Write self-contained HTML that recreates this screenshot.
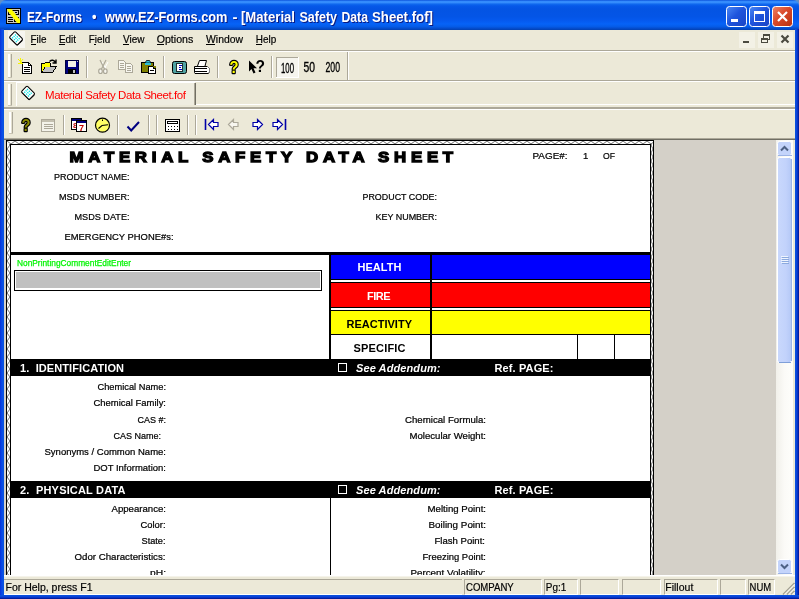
<!DOCTYPE html>
<html><head><meta charset="utf-8">
<style>
*{box-sizing:border-box;margin:0;padding:0}
html,body{width:799px;height:599px;overflow:hidden;background:#ece9d8;font-family:"Liberation Sans",sans-serif}
.a{position:absolute}
svg{will-change:transform}
.t{position:absolute;white-space:nowrap;line-height:1}
#title{left:0;top:0;width:799px;height:30px;background:linear-gradient(to bottom,#0b50d8 0%,#2f86fb 4%,#3d95ff 7%,#2a82f8 10%,#0f68ee 14%,#0658e8 20%,#0454e3 30%,#0455e6 55%,#0559ee 68%,#0663f7 80%,#055ce9 88%,#044ed0 94%,#0340b0 100%);border-radius:6px 6px 0 0}
#lb{left:0;top:29px;width:4px;height:570px;background:linear-gradient(to right,#0831d9,#0a4de8 50%,#0855dd)}
#rb{left:795px;top:29px;width:4px;height:570px;background:linear-gradient(to right,#0855dd,#0a3fd8 50%,#00138c)}
#bb{left:0;top:595px;width:799px;height:4px;background:linear-gradient(to bottom,#0855dd,#0a3fd8 50%,#00138c)}
.ttxt{color:#fff;font-weight:bold;font-size:14px;left:27px;top:10px;text-shadow:1px 1px 0 #0a1883}
.m{font-size:11.5px;top:33px;color:#000}
.m u{text-decoration:underline}
.hl{height:1px;left:4px;width:791px}
.grip{width:3px;border-left:1px solid #fff;border-right:1px solid #aca899;background:#ece9d8;box-shadow:1px 0 0 #ece9d8}
.vsep{width:2px;border-left:1px solid #aca899;border-right:1px solid #fff}
.lbl{font-size:9px;color:#000;text-align:right}
.sec{font-size:11px;font-weight:bold;color:#fff}
.sp{top:579px;height:16px;border:1px solid;border-color:#aca899 #fff #fff #aca899;font-size:11px;line-height:14px;padding-left:1px;white-space:nowrap;overflow:hidden}
</style></head><body>
<!-- frame -->
<div class="a" style="left:0;top:0;width:799px;height:8px;background:#5f8fc8"></div>
<div class="a" id="title"></div>
<div class="a" id="lb"></div><div class="a" id="rb"></div><div class="a" id="bb"></div>


<!-- chrome overlay -->
<svg class="a" style="left:0;top:0" width="799" height="599" viewBox="0 0 799 599" font-family="Liberation Sans, sans-serif">
<defs>
<linearGradient id="gb" x1="0" y1="0" x2="1" y2="1"><stop offset="0" stop-color="#4d8af5"/><stop offset="0.45" stop-color="#1f55dd"/><stop offset="1" stop-color="#1a44c4"/></linearGradient>
<linearGradient id="gr" x1="0" y1="0" x2="1" y2="1"><stop offset="0" stop-color="#ee8468"/><stop offset="0.45" stop-color="#d9492a"/><stop offset="1" stop-color="#b7300f"/></linearGradient>
<linearGradient id="gs" x1="0" y1="0" x2="1" y2="0"><stop offset="0" stop-color="#c9d8fc"/><stop offset="0.6" stop-color="#c2d2fb"/><stop offset="1" stop-color="#b4c8f6"/></linearGradient>
<linearGradient id="gt" x1="0" y1="0" x2="1" y2="0"><stop offset="0" stop-color="#f1f0ea"/><stop offset="0.5" stop-color="#fbfaf7"/><stop offset="1" stop-color="#fefefb"/></linearGradient>

</defs>
<!-- title icon -->
<g shape-rendering="crispEdges">
<rect x="6" y="8" width="15" height="16" fill="#000"/><rect x="7" y="9" width="13" height="14" fill="#c8c8c4"/>
<rect x="8.500" y="10.500" width="10" height="4" fill="none" stroke="#000"/>
<path d="M10,12.500 h2 M15,12.500 h2 M8,17.500 h5 M8,19.500 h5 M8,21.500 h5 M14.500,17 v4.500 h4 M15,17.500 h3.500 v3" stroke="#000" stroke-width="1" fill="none"/>
</g>
<path d="M7.600,9 L11.300,9 L20,19.800 L20,23 L17.200,23 L7.600,11 Z" fill="#ffff00"/>
<!-- title buttons -->
<rect x="726.5" y="6.5" width="20" height="20" rx="3" fill="url(#gb)" stroke="#fff" stroke-width="1"/>
<rect x="731" y="19" width="7" height="3" fill="#fff"/>
<rect x="749.5" y="6.5" width="20" height="20" rx="3" fill="url(#gb)" stroke="#fff" stroke-width="1"/>
<rect x="754.5" y="11.5" width="10" height="10" fill="none" stroke="#fff" stroke-width="1"/><rect x="754" y="11" width="11" height="3" fill="#fff"/>
<rect x="772.5" y="6.5" width="20" height="20" rx="3" fill="url(#gr)" stroke="#fff" stroke-width="1"/>
<path d="M778,12 L787,21 M787,12 L778,21" stroke="#fff" stroke-width="2.2" stroke-linecap="butt"/>
<!-- menu icon -->
<rect x="8" y="31" width="17" height="17" fill="#f7f6f0"/>
<g transform="translate(16,38.3)"><g transform="rotate(45)"><rect x="-5.2" y="-3.6" width="11.6" height="8.4" rx="1.2" fill="#000"/><rect x="-5.6" y="-4.2" width="11.2" height="8.2" rx="1.2" fill="#fff" stroke="#000" stroke-width="1"/><path d="M-3.5,-2 h7 M-3.5,0 h7 M-3.5,2 h7" stroke="#00e0e0" stroke-width="1.1" stroke-dasharray="1.6 1"/></g></g>
<!-- MDI buttons -->
<g shape-rendering="crispEdges">
<rect x="739" y="32" width="16" height="16" fill="#f3f1e6"/><rect x="758" y="32" width="16" height="16" fill="#f3f1e6"/><rect x="777" y="32" width="16" height="16" fill="#f3f1e6"/>
<rect x="743" y="41" width="6" height="2" fill="#4b4a40"/>
<rect x="763.5" y="34.5" width="6" height="5" fill="none" stroke="#4b4a40"/><rect x="763" y="34" width="7" height="2" fill="#4b4a40"/>
<rect x="761.5" y="38.5" width="6" height="4" fill="#f3f1e6" stroke="#4b4a40"/><rect x="761" y="38" width="7" height="2" fill="#4b4a40"/>
</g>
<path d="M781.5,35.5 L788.5,42.5 M788.5,35.5 L781.5,42.5" stroke="#4b4a40" stroke-width="2.2"/>
</svg>

<!-- toolbars overlay -->
<svg class="a" style="left:0;top:0" width="799" height="599" viewBox="0 0 799 599" font-family="Liberation Sans, sans-serif">
<g shape-rendering="crispEdges">
<!-- grippers -->
<g id="grips"><rect x="8" y="54" width="2" height="24" fill="#fff"/><rect x="10" y="54" width="1" height="24" fill="#e4e1d0"/><rect x="11" y="54" width="1" height="24" fill="#aca899"/><rect x="8" y="77" width="4" height="1" fill="#c8c4b4"/><rect x="8" y="84" width="2" height="22" fill="#fff"/><rect x="10" y="84" width="1" height="22" fill="#e4e1d0"/><rect x="11" y="84" width="1" height="22" fill="#aca899"/><rect x="8" y="105" width="4" height="1" fill="#c8c4b4"/><rect x="9" y="112" width="2" height="22" fill="#fff"/><rect x="11" y="112" width="1" height="22" fill="#e4e1d0"/><rect x="12" y="112" width="1" height="22" fill="#aca899"/><rect x="9" y="133" width="4" height="1" fill="#c8c4b4"/></g>
<!-- separators toolbar1 -->
<g fill="#aca899"><rect x="86" y="56" width="1" height="22"/><rect x="163" y="56" width="1" height="22"/><rect x="217" y="56" width="1" height="22"/><rect x="271" y="56" width="1" height="22"/><rect x="347" y="52" width="1" height="28"/></g>
<g fill="#fff"><rect x="87" y="56" width="1" height="22"/><rect x="164" y="56" width="1" height="22"/><rect x="218" y="56" width="1" height="22"/><rect x="272" y="56" width="1" height="22"/><rect x="348" y="52" width="1" height="28"/></g>
<!-- separators toolbar2 -->
<g fill="#aca899"><rect x="63" y="115" width="1" height="20"/><rect x="117" y="115" width="1" height="20"/><rect x="148" y="115" width="1" height="20"/><rect x="156" y="115" width="1" height="20"/><rect x="187" y="115" width="1" height="20"/><rect x="195" y="115" width="1" height="20"/></g>
<g fill="#fff"><rect x="64" y="115" width="1" height="20"/><rect x="118" y="115" width="1" height="20"/><rect x="149" y="115" width="1" height="20"/><rect x="157" y="115" width="1" height="20"/><rect x="188" y="115" width="1" height="20"/><rect x="196" y="115" width="1" height="20"/></g>

<!-- NEW -->
<path d="M22.5,62.5 h6 l3,3 v8 h-9 z" fill="#fff" stroke="#000"/><path d="M28.5,62.5 v3 h3" fill="none" stroke="#000"/>
<path d="M24,67.5 h6 M24,69.5 h6 M24,71.5 h6" stroke="#000"/>
<path d="M18,59 l5,5 M23,59 l-3,4 M18,63.500 h5 M20.500,58 v5" stroke="#f4f400" fill="none" shape-rendering="auto"/>
<!-- OPEN -->
<path d="M41.500,72.500 v-9 h3 l1,-1 h4 l1,1 v3" fill="#ffff00" stroke="#000"/>
<path d="M41.500,72.500 l4,-6 h11 l-4,6 z" fill="#c0c0c0" stroke="#000"/>
<path d="M42,64 h8 v2.500 h-5 l-3,5 z" fill="#ffff00"/>
<path d="M49.500,61.500 q3.500,-3 6,1 M56,59.500 v3.500 h-3.500" fill="none" stroke="#000" stroke-width="1.400" shape-rendering="auto"/>
<!-- SAVE -->
<rect x="65" y="60" width="14" height="14" fill="#000080"/><rect x="65.500" y="60.500" width="13" height="13" fill="none" stroke="#000040"/>
<rect x="68" y="61" width="8" height="6" fill="#f4f2e6"/><rect x="68" y="69" width="8" height="5" fill="#000"/><rect x="73" y="70" width="2" height="3" fill="#c0c0c0"/><rect x="77" y="61" width="1" height="1" fill="#c0c0c0"/>
<!-- CUT (disabled) -->
<g shape-rendering="auto" fill="none"><path d="M101,61 L105.500,69.500 M107,61 L102.500,69.500" stroke="#fff" transform="translate(1,1)"/><path d="M100,60 L104.500,69 M106,60 L101.500,69" stroke="#aca899" stroke-width="1.2"/><ellipse cx="100.500" cy="71.200" rx="1.800" ry="2.300" stroke="#aca899" stroke-width="1.200" fill="#f8f7f0"/><ellipse cx="105.300" cy="71.200" rx="1.800" ry="2.300" stroke="#aca899" stroke-width="1.200" fill="#f8f7f0"/></g>
<!-- COPY (disabled) -->
<path d="M118.500,60.500 h5 l2,2 v7 h-7 z" fill="#f8f7f0" stroke="#aca899"/><path d="M120,63.500 h4 M120,65.500 h4 M120,67.500 h4" stroke="#aca899"/>
<path d="M125.500,63.500 h5 l2,2 v7 h-7 z" fill="#f8f7f0" stroke="#aca899"/><path d="M127,66.500 h4 M127,68.500 h4 M127,70.500 h4" stroke="#aca899"/>
<!-- PASTE -->
<rect x="141.500" y="62.500" width="12" height="10" rx="1" fill="#808000" stroke="#000"/>
<path d="M145,63 l1.500,-2.500 h3 l1.500,2.500 z" fill="#30c0d8" stroke="#000" stroke-width="0.8" shape-rendering="auto"/><rect x="145" y="63" width="6" height="1.500" fill="#30c0d8"/>
<rect x="148.500" y="66.500" width="7" height="7" fill="#fff" stroke="#000"/><rect x="153" y="66" width="3" height="2" fill="#808000"/><path d="M153.500,66.500 v2 h2" fill="none" stroke="#000"/><path d="M150,70.500 h4" stroke="#000"/>
<!-- PREVIEW -->
<rect x="172.500" y="61.500" width="14" height="12" rx="2" fill="#4fa3a3" stroke="#000" shape-rendering="auto"/><rect x="176.500" y="63.500" width="6" height="8" fill="#fff" stroke="#203030"/><path d="M178.500,65.500 h3 M178.500,67.500 h2 M178.500,69.500 h3" stroke="#0000c0"/>
<!-- PRINT -->
<path d="M197.500,66 l2,-5.500 h7 l-1.500,5.500" fill="#fff" stroke="#000" shape-rendering="auto"/>
<path d="M194.500,66.500 h13 l2,2 v4 l-1.500,1 h-13 l-0.500,-1 z" fill="#fff" stroke="#000" shape-rendering="auto"/>
<path d="M195,68.500 h12 M195,71.500 h12" stroke="#000" stroke-width="1.500"/><path d="M207.500,66.500 l2,2 v4" stroke="#808080" fill="none"/>
<!-- CALENDAR icon (toolbar2) -->
<rect x="71.500" y="118.500" width="10" height="11" fill="#fff" stroke="#000"/><rect x="72" y="119" width="9" height="2" fill="#000080"/><text x="73" y="128" font-size="8" font-weight="bold" fill="#c00000" shape-rendering="auto">8</text>
<rect x="76.500" y="120.500" width="10" height="11" fill="#fff" stroke="#000"/><rect x="77" y="121" width="9" height="2" fill="#000080"/>
<!-- FORM (disabled) -->
<rect x="41.500" y="119.500" width="13" height="12" fill="#f4f3ea" stroke="#aca899"/><rect x="42" y="120" width="12" height="2" fill="#c4c0b0"/><path d="M43.500,124.500 h9 M43.500,126.500 h9 M43.500,128.500 h9" stroke="#aca899"/>
<!-- CALCULATOR -->
<rect x="165.500" y="119.500" width="14" height="12" rx="1" fill="#fff" stroke="#000" stroke-width="1.300"/><rect x="167.500" y="121.500" width="10" height="2" fill="#fff" stroke="#000"/>
<path d="M168,126.500 h1 M171,126.500 h1 M174,126.500 h1 M177,126.500 h1 M168,129.500 h1 M171,129.500 h1 M174,129.500 h1 M177,129.500 h1" stroke="#000" stroke-width="1.600"/>
<!-- zoom pressed button -->
<rect x="276" y="57" width="23" height="21" fill="#f6f5ee"/><rect x="276" y="57" width="23" height="1" fill="#aca899"/><rect x="276" y="57" width="1" height="21" fill="#aca899"/><rect x="276" y="77" width="23" height="1" fill="#fff"/><rect x="298" y="57" width="1" height="21" fill="#fff"/>
</g>
<!-- anti-aliased icon parts -->
<text x="76.500" y="130.500" font-size="9" font-weight="bold" fill="#c00000" transform="translate(2.500,0)">7</text>
<!-- help ? yellow -->
<text x="229.500" y="72.800" font-size="17" font-weight="bold" fill="#ffff00" stroke="#000" stroke-width="2.600" stroke-linejoin="round" paint-order="stroke" textLength="9" lengthAdjust="spacingAndGlyphs">?</text>
<!-- context help -->
<path d="M249,60.500 v11 l2.500,-2.500 l2,4.500 l2,-1 l-2,-4.300 h3.500 z" fill="#000"/>
<text x="255.500" y="72.300" font-size="17" font-weight="bold" fill="#000" textLength="9.500" lengthAdjust="spacingAndGlyphs">?</text>
<!-- ? olive -->
<text x="21.500" y="131.300" font-size="17" font-weight="bold" fill="#8c8c00" stroke="#000" stroke-width="2.600" stroke-linejoin="round" paint-order="stroke" textLength="9" lengthAdjust="spacingAndGlyphs">?</text>
<!-- clock -->
<circle cx="102.500" cy="125.200" r="7" fill="#ffff66" stroke="#000" stroke-width="1.200"/><path d="M98.500,128.500 L102,125.500 L108,124.800" stroke="#000" stroke-width="1.100" fill="none"/><path d="M102.500,119.500 v1.500" stroke="#000"/>
<!-- check -->
<path d="M127.500,126.500 L131.200,130.500 L139,122" stroke="#000080" stroke-width="2" fill="none"/>
<!-- zoom digits -->
<g font-size="14" fill="#000" stroke="#000" stroke-width="0.350"><text x="281" y="72.500" textLength="13" lengthAdjust="spacingAndGlyphs">100</text><text x="303.500" y="72" textLength="11.500" lengthAdjust="spacingAndGlyphs">50</text><text x="325.500" y="72" textLength="14.500" lengthAdjust="spacingAndGlyphs">200</text></g>
<!-- nav arrows -->
<g fill="#fff" stroke="#0000a8" stroke-width="1.200" stroke-linejoin="miter">
<path d="M205.500,119 v11" stroke-width="1.600"/><path d="M208.500,124.500 l5,-5 v3 h4.500 v4 h-4.500 v3 z"/>
<path d="M262.500,124.500 l-5,-5 v3 h-4.500 v4 h4.500 v3 z"/>
<path d="M285.500,119 v11" stroke-width="1.600"/><path d="M282.500,124.500 l-5,-5 v3 h-4.500 v4 h4.500 v3 z"/>
</g>
<path d="M228.500,124.500 l5,-5 v3 h4.500 v4 h-4.500 v3 z" fill="#f8f7f0" stroke="#aca899" stroke-width="1.200"/>
<!-- tab -->
<g shape-rendering="crispEdges"><rect x="16" y="82" width="179" height="1" fill="#fff"/><rect x="16" y="82" width="1" height="24" fill="#fff"/><rect x="194" y="83" width="1" height="22" fill="#aca899"/><rect x="195" y="83" width="1" height="22" fill="#716f64"/><rect x="196" y="104" width="599" height="1" fill="#fff"/><rect x="17" y="83" width="177" height="22" fill="#efede0"/></g>
<g transform="translate(28,92.800)"><g transform="rotate(45)"><rect x="-5.2" y="-3.6" width="11.6" height="8.4" rx="1.2" fill="#000"/><rect x="-5.6" y="-4.2" width="11.2" height="8.2" rx="1.2" fill="#fff" stroke="#000" stroke-width="1"/><path d="M-3.5,-2 h7 M-3.5,0 h7 M-3.5,2 h7" stroke="#00e0e0" stroke-width="1.1" stroke-dasharray="1.6 1"/></g></g>
<text x="45" y="98.500" font-size="11.500" fill="#ff0000" textLength="141" lengthAdjust="spacing">Material Safety Data Sheet.fof</text>
</svg>
<!-- title + menu text -->
<svg class="a" style="left:0;top:0" width="799" height="599" viewBox="0 0 799 599" font-family="Liberation Sans, sans-serif">
<g font-size="14" font-weight="bold"><text x="28" y="23" fill="#0a1a80" textLength="55" lengthAdjust="spacingAndGlyphs">EZ-Forms</text><text x="93" y="23" fill="#0a1a80" textLength="4.5" lengthAdjust="spacingAndGlyphs">•</text><text x="106" y="23" fill="#0a1a80" textLength="122.5" lengthAdjust="spacingAndGlyphs">www.EZ-Forms.com</text><text x="233.5" y="23" fill="#0a1a80" textLength="5.0" lengthAdjust="spacingAndGlyphs">-</text><text x="242" y="23" fill="#0a1a80" textLength="54" lengthAdjust="spacingAndGlyphs">[Material</text><text x="300.5" y="23" fill="#0a1a80" textLength="37.5" lengthAdjust="spacingAndGlyphs">Safety</text><text x="342.5" y="23" fill="#0a1a80" textLength="26.5" lengthAdjust="spacingAndGlyphs">Data</text><text x="373" y="23" fill="#0a1a80" textLength="61" lengthAdjust="spacingAndGlyphs">Sheet.fof]</text>
<text x="27" y="22" fill="#fff" textLength="55" lengthAdjust="spacingAndGlyphs">EZ-Forms</text><text x="92" y="22" fill="#fff" textLength="4.5" lengthAdjust="spacingAndGlyphs">•</text><text x="105" y="22" fill="#fff" textLength="122.5" lengthAdjust="spacingAndGlyphs">www.EZ-Forms.com</text><text x="232.5" y="22" fill="#fff" textLength="5.0" lengthAdjust="spacingAndGlyphs">-</text><text x="241" y="22" fill="#fff" textLength="54" lengthAdjust="spacingAndGlyphs">[Material</text><text x="299.5" y="22" fill="#fff" textLength="37.5" lengthAdjust="spacingAndGlyphs">Safety</text><text x="341.5" y="22" fill="#fff" textLength="26.5" lengthAdjust="spacingAndGlyphs">Data</text><text x="372" y="22" fill="#fff" textLength="61" lengthAdjust="spacingAndGlyphs">Sheet.fof]</text></g>
<g font-size="11" fill="#000" stroke="#000" stroke-width="0.2">
<text x="30.5" y="42.500" textLength="16" lengthAdjust="spacingAndGlyphs">File</text>
<text x="59" y="42.500" textLength="17" lengthAdjust="spacingAndGlyphs">Edit</text>
<text x="88.700" y="42.500" textLength="21.500" lengthAdjust="spacingAndGlyphs">Field</text>
<text x="123" y="42.500" textLength="21.500" lengthAdjust="spacingAndGlyphs">View</text>
<text x="156.700" y="42.500" textLength="36.600" lengthAdjust="spacingAndGlyphs">Options</text>
<text x="206" y="42.500" textLength="37" lengthAdjust="spacingAndGlyphs">Window</text>
<text x="255.800" y="42.500" textLength="20.500" lengthAdjust="spacingAndGlyphs">Help</text>
</g>
<g shape-rendering="crispEdges" fill="#000"><rect x="31" y="44" width="5" height="1"/><rect x="59" y="44" width="6" height="1"/><rect x="94" y="44" width="2" height="1"/><rect x="123" y="44" width="6" height="1"/><rect x="157" y="44" width="7" height="1"/><rect x="206" y="44" width="9" height="1"/><rect x="256" y="44" width="6" height="1"/></g>
</svg>
<!-- menu -->
<div class="a hl" style="top:50px;background:#aca899"></div>
<div class="a hl" style="top:51px;background:#fff"></div>
<div class="a hl" style="top:80px;background:#aca899"></div>
<div class="a hl" style="top:81px;background:#fff"></div>
<div class="a hl" style="top:107px;background:#aca899;height:2px"></div>
<div class="a hl" style="top:109px;background:#fff"></div>

<!-- doc area -->
<div class="a" style="left:4px;top:138px;width:791px;height:1px;background:#aca899"></div><div class="a" style="left:4px;top:139px;width:791px;height:1px;background:#716f64"></div><div class="a" style="left:5px;top:139px;width:1px;height:436px;background:#716f64"></div>
<div class="a" style="left:4px;top:140px;width:772px;height:435px;background:#d4d0c8"></div>
<div class="a" id="page" style="left:6px;top:140px;width:648px;height:435px;overflow:hidden">
<svg class="a" style="left:0;top:0" width="648" height="435" viewBox="6 140 648 435" shape-rendering="crispEdges">
<defs><pattern id="hatch" x="7" y="141" width="8" height="3" patternUnits="userSpaceOnUse"><rect width="8" height="3" fill="#fff"/><path d="M0,0 L4,3 L8,0" stroke="#444" stroke-width="0.75" fill="none" shape-rendering="auto"/></pattern>
<pattern id="hatchv" x="7" y="141" width="3" height="8" patternUnits="userSpaceOnUse"><rect width="3" height="8" fill="#fff"/><path d="M0,0 L3,4 L0,8" stroke="#444" stroke-width="0.75" fill="none" shape-rendering="auto"/></pattern>
<pattern id="hatchr" x="651" y="141" width="2" height="8" patternUnits="userSpaceOnUse"><rect width="2" height="8" fill="#fff"/><path d="M2,0 L0,4 L2,8" stroke="#444" stroke-width="0.75" fill="none" shape-rendering="auto"/></pattern></defs>
<rect x="6" y="140" width="648" height="440" fill="#fff"/>
<rect x="7" y="141" width="646" height="3" fill="url(#hatch)"/>
<rect x="7" y="144" width="3" height="440" fill="url(#hatchv)"/>
<rect x="651" y="144" width="2" height="440" fill="url(#hatchr)"/>
<rect x="6" y="140" width="648" height="1" fill="#000"/>
<rect x="6" y="140" width="1" height="440" fill="#000"/>
<rect x="653" y="140" width="1" height="440" fill="#000"/>
<rect x="10" y="144" width="641" height="1" fill="#000"/>
<rect x="10" y="144" width="1" height="440" fill="#000"/>
<rect x="650" y="144" width="1" height="440" fill="#000"/>
<!-- header divider -->
<rect x="11" y="252" width="639" height="3" fill="#000"/>
<rect x="329" y="255" width="2" height="104" fill="#000"/>
<!-- comment box -->
<rect x="14.5" y="270.5" width="307" height="20" fill="#fff" stroke="#000" stroke-width="1"/>
<rect x="16" y="272" width="304" height="16" fill="#c0c0c0"/>
<!-- color rows -->
<rect x="331" y="255" width="319" height="24" fill="#0000ff"/>
<rect x="331" y="279" width="319" height="1" fill="#000"/>
<rect x="331" y="282" width="319" height="1" fill="#000"/>
<rect x="331" y="283" width="319" height="24" fill="#ff0000"/>
<rect x="331" y="307" width="319" height="1" fill="#000"/>
<rect x="331" y="310" width="319" height="1" fill="#000"/>
<rect x="331" y="311" width="319" height="23" fill="#ffff00"/>
<rect x="331" y="334" width="319" height="1" fill="#000"/>
<rect x="430" y="255" width="2" height="104" fill="#000"/>
<rect x="577" y="335" width="1" height="24" fill="#000"/>
<rect x="614" y="335" width="1" height="24" fill="#000"/>
<!-- section bars -->
<rect x="11" y="359" width="640" height="17" fill="#000"/>
<rect x="11" y="481" width="640" height="17" fill="#000"/>
<rect x="330" y="498" width="1" height="90" fill="#000"/>
<rect x="338.5" y="363.5" width="8" height="8" fill="none" stroke="#fff"/>
<rect x="338.5" y="485.5" width="8" height="8" fill="none" stroke="#fff"/>
</svg>
<svg class="a" style="left:0;top:0" width="648" height="435" viewBox="6 140 648 435" font-family="Liberation Sans, sans-serif">
<g font-size="15" font-weight="bold" fill="#000" stroke="#000" stroke-width="1.3" stroke-linejoin="miter" transform="translate(69.5,0) scale(1.12,1)">
<text x="0" y="162.5" textLength="342.5" lengthAdjust="spacing">MATERIAL  SAFETY  DATA  SHEET</text>
</g>
<g font-size="9.5" fill="#000" stroke="#000" stroke-width="0.22" class="lb">
<text x="54" y="180" textLength="75.5" lengthAdjust="spacingAndGlyphs">PRODUCT NAME:</text>
<text x="59" y="200" textLength="70.5" lengthAdjust="spacingAndGlyphs">MSDS NUMBER:</text>
<text x="74.5" y="220" textLength="55" lengthAdjust="spacingAndGlyphs">MSDS DATE:</text>
<text x="64.5" y="240" textLength="109" lengthAdjust="spacingAndGlyphs">EMERGENCY PHONE#s:</text>
<text x="362.5" y="200" textLength="74.5" lengthAdjust="spacingAndGlyphs">PRODUCT CODE:</text>
<text x="375.5" y="220" textLength="61.5" lengthAdjust="spacingAndGlyphs">KEY NUMBER:</text>
<text x="532.5" y="159" textLength="35" lengthAdjust="spacingAndGlyphs">PAGE#:</text>
<text x="583" y="159">1</text>
<text x="603" y="159" textLength="12" lengthAdjust="spacingAndGlyphs">OF</text>
</g>
<text x="17" y="266" font-size="9" fill="#00f400" stroke="#00f400" stroke-width="0.250" textLength="114" lengthAdjust="spacingAndGlyphs">NonPrintingCommentEditEnter</text>
<g font-size="11" font-weight="bold">
<text x="357.5" y="270.5" fill="#fff" textLength="44">HEALTH</text>
<text x="367" y="300" fill="#fff" textLength="23.5">FIRE</text>
<text x="346.5" y="328" fill="#000" textLength="65.5">REACTIVITY</text>
<text x="353.5" y="352" fill="#000" textLength="52">SPECIFIC</text>
<text x="20" y="372" fill="#fff" textLength="104" xml:space="preserve">1.  IDENTIFICATION</text>
<text x="20" y="494" fill="#fff" textLength="105.5" xml:space="preserve">2.  PHYSICAL DATA</text>
<text x="356" y="372" fill="#fff" font-style="italic" textLength="84.5">See Addendum:</text>
<text x="356" y="494" fill="#fff" font-style="italic" textLength="84.5">See Addendum:</text>
<text x="494.5" y="372" fill="#fff" textLength="59">Ref. PAGE:</text>
<text x="494.5" y="494" fill="#fff" textLength="59">Ref. PAGE:</text>
</g>
<g font-size="9.5" fill="#000" stroke="#000" stroke-width="0.22" class="lb">
<text x="97.5" y="390" textLength="68.5" lengthAdjust="spacingAndGlyphs">Chemical Name:</text>
<text x="93.5" y="406" textLength="72.5" lengthAdjust="spacingAndGlyphs">Chemical Family:</text>
<text x="137.5" y="422.5" textLength="28.5" lengthAdjust="spacingAndGlyphs">CAS #:</text>
<text x="113.5" y="438.5" textLength="47.5" lengthAdjust="spacingAndGlyphs">CAS Name:</text>
<text x="44.5" y="454.5" textLength="121.5" lengthAdjust="spacingAndGlyphs">Synonyms / Common Name:</text>
<text x="93.5" y="470.5" textLength="72.5" lengthAdjust="spacingAndGlyphs">DOT Information:</text>
<text x="405" y="422.5" textLength="81" lengthAdjust="spacingAndGlyphs">Chemical Formula:</text>
<text x="409.5" y="438.5" textLength="76.5" lengthAdjust="spacingAndGlyphs">Molecular Weight:</text>
<text x="111.5" y="512" textLength="54.5" lengthAdjust="spacingAndGlyphs">Appearance:</text>
<text x="140.5" y="528" textLength="25" lengthAdjust="spacingAndGlyphs">Color:</text>
<text x="141.5" y="544" textLength="24" lengthAdjust="spacingAndGlyphs">State:</text>
<text x="74.5" y="560" textLength="91" lengthAdjust="spacingAndGlyphs">Odor Characteristics:</text>
<text x="150" y="576" textLength="16" lengthAdjust="spacingAndGlyphs">pH:</text>
<text x="427.5" y="512" textLength="58.5" lengthAdjust="spacingAndGlyphs">Melting Point:</text>
<text x="428.5" y="528" textLength="57.5" lengthAdjust="spacingAndGlyphs">Boiling Point:</text>
<text x="434.5" y="544" textLength="50.5" lengthAdjust="spacingAndGlyphs">Flash Point:</text>
<text x="422.5" y="560" textLength="63.5" lengthAdjust="spacingAndGlyphs">Freezing Point:</text>
<text x="410.5" y="576" textLength="75" lengthAdjust="spacingAndGlyphs">Percent Volatility:</text>
</g>
</svg>
</div>

<!-- scrollbar -->
<svg class="a" style="left:776px;top:140px" width="19" height="435" viewBox="776 140 19 435">
<rect x="776" y="140" width="17" height="435" fill="url(#gt)"/>
<rect x="793" y="140" width="2" height="435" fill="#ece9d8"/>
<!-- up button -->
<rect x="777.500" y="141.500" width="14" height="14" rx="2" fill="#c4d4fb" stroke="#fff" stroke-width="1"/>
<rect x="778" y="155" width="14" height="1" fill="#9db4e6"/>
<path d="M781,150.500 L784.500,147 L788,150.500" fill="none" stroke="#4d6185" stroke-width="2"/>
<!-- thumb -->
<rect x="777.500" y="157.500" width="14" height="205" rx="2" fill="url(#gs)" stroke="#fff" stroke-width="1"/>
<rect x="791" y="159" width="1" height="202" fill="#9db4e6"/><rect x="779" y="362" width="12" height="1" fill="#7f9fd8"/>
<g shape-rendering="crispEdges"><path d="M781,256.500 h7 M781,258.500 h7 M781,260.500 h7 M781,262.500 h7" stroke="#eef4fe"/><path d="M782,257.500 h7 M782,259.500 h7 M782,261.500 h7 M782,263.500 h7" stroke="#8caade"/></g>
<!-- down button -->
<rect x="777.500" y="559.500" width="14" height="14" rx="2" fill="#c4d4fb" stroke="#fff" stroke-width="1"/>
<rect x="778" y="573" width="14" height="1" fill="#9db4e6"/>
<path d="M781,564.500 L784.500,568 L788,564.500" fill="none" stroke="#4d6185" stroke-width="2"/>
</svg>
<!-- status -->
<div class="a" style="left:4px;top:575px;width:791px;height:1px;background:#fff"></div><div class="a" style="left:4px;top:576px;width:791px;height:1px;background:#f5f3ea"></div>
<div class="a" style="left:4px;top:579px;width:458px;height:1px;background:#aca899"></div>
<div class="a" style="left:4px;top:594px;width:458px;height:1px;background:#fff"></div>
<div class="a sp" style="left:464px;width:78px"></div>
<div class="a sp" style="left:544px;width:34px"></div>
<div class="a sp" style="left:580px;width:39px"></div>
<div class="a sp" style="left:622px;width:39px"></div>
<div class="a sp" style="left:664px;width:54px"></div>
<div class="a sp" style="left:720px;width:26px"></div>
<div class="a sp" style="left:748px;width:27px"></div>
<svg class="a" style="left:0;top:576px" width="799" height="23" viewBox="0 576 799 23" font-family="Liberation Sans, sans-serif" font-size="11" fill="#000" stroke="#000" stroke-width="0.2">
<text x="5.500" y="590.500" textLength="87" lengthAdjust="spacingAndGlyphs">For Help, press F1</text>
<text x="466" y="590.500" textLength="47.700" lengthAdjust="spacingAndGlyphs">COMPANY</text>
<text x="545.800" y="590.500" textLength="20.500" lengthAdjust="spacingAndGlyphs">Pg:1</text>
<text x="665.300" y="590.500" textLength="28" lengthAdjust="spacingAndGlyphs">Fillout</text>
<text x="749.600" y="590.500" textLength="21.600" lengthAdjust="spacingAndGlyphs">NUM</text>
<g stroke-width="1" shape-rendering="auto"><path d="M783,594.500 L794.500,583 M787,594.500 L794.500,587 M791,594.500 L794.500,591" stroke="#a09e8e" stroke-width="1.500"/><path d="M784.200,594.500 L794.500,584.200 M788.200,594.500 L794.500,588.200 M792.200,594.500 L794.500,592.200" stroke="#fff" stroke-width="0.800"/></g>
</svg>
</body></html>
